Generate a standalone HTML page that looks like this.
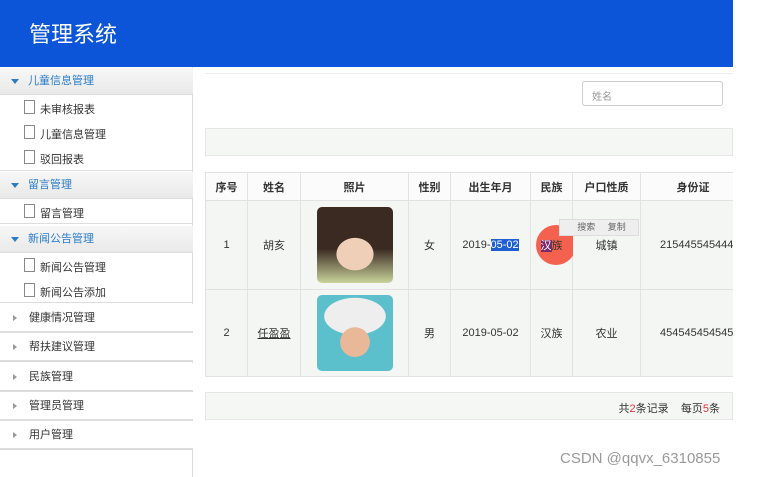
<!DOCTYPE html><html><head><meta charset="utf-8"><style>
*{margin:0;padding:0;box-sizing:border-box}
body{width:760px;height:477px;background:#fff;font-family:"Liberation Sans","Noto Sans CJK SC",sans-serif;position:relative;overflow:hidden;font-size:11px;color:#333}
.hdr{position:absolute;left:0;top:0;width:733px;height:67px;background:#0d55d8;color:#fff;font-size:22px;padding:17px 0 0 29px}
.side{position:absolute;left:0;top:67px;width:193px;height:410px;background:#fff;border-right:1px solid #ddd}
.r{position:absolute;left:0;width:193px;border-bottom:1px solid #ddd}
.g{background:linear-gradient(#f7f7f7,#e9e9e9);color:#2a7cc7;height:27px;line-height:27px;padding-left:28px;font-size:11px}
.g:before{content:"";position:absolute;left:11px;top:11px;border:4px solid transparent;border-top:5px solid #2a7cc7;border-bottom:0}
.it{position:absolute;left:40px;font-size:11px;color:#333}
.it:before{content:"";position:absolute;left:-16px;top:-1px;width:9px;height:12px;border:1px solid #888;background:#fff}
.c{background:#fff;height:29px;line-height:29px;padding-left:29px;border-bottom:2px solid #ddd}
.c:before{content:"";position:absolute;left:13px;top:11px;border:3px solid transparent;border-left:4px solid #999;border-right:0}
.main{position:absolute;left:193px;top:67px;width:540px;height:410px;background:#fff}
.tw{position:absolute;left:205px;top:172px;width:528px;height:206px;overflow:hidden}
table{border-collapse:collapse;font-size:11px;table-layout:fixed;width:540px}
td,th{border:1px solid #e2e2e2;text-align:center;color:#333}
th{height:28px;background:#fbfbfb;font-weight:bold}
tbody td{background:#f4f6f4}
.ph{width:76px;height:76px;border-radius:5px;margin:auto}
</style></head><body>
<div class="hdr">管理系统</div>
<div class="side">
<div class="r g" style="top:1px">儿童信息管理</div>
<div class="r" style="top:28px;height:76px;border-right:1px solid #ddd"></div>
<div class="it" style="top:34px">未审核报表</div>
<div class="it" style="top:59px">儿童信息管理</div>
<div class="it" style="top:84px">驳回报表</div>
<div class="r g" style="top:105px">留言管理</div>
<div class="r" style="top:132px;height:25px"></div>
<div class="it" style="top:138px">留言管理</div>
<div class="r g" style="top:159px">新闻公告管理</div>
<div class="r" style="top:186px;height:50px"></div>
<div class="it" style="top:192px">新闻公告管理</div>
<div class="it" style="top:217px">新闻公告添加</div>
<div class="r c" style="top:237px">健康情况管理</div>
<div class="r c" style="top:266px">帮扶建议管理</div>
<div class="r c" style="top:296px">民族管理</div>
<div class="r c" style="top:325px">管理员管理</div>
<div class="r c" style="top:354px">用户管理</div>
<div style="position:absolute;left:193px;top:265px;width:3px;height:90px;background:#4a5670"></div>
</div>
<div class="main"></div>
<div style="position:absolute;left:205px;top:73px;width:528px;height:1px;background:#eee"></div>
<div style="position:absolute;left:582px;top:81px;width:141px;height:25px;border:1px solid #ccc;border-radius:3px;color:#999;padding:6px 0 0 9px;font-size:10px">姓名</div>
<div style="position:absolute;left:205px;top:128px;width:528px;height:28px;background:#f5f7f5;border:1px solid #e6e6e6"></div>
<div class="tw"><table>
<colgroup><col width="42"><col width="53"><col width="108"><col width="42"><col width="80"><col width="42"><col width="68"><col width="105"></colgroup>
<thead><tr><th>序号</th><th>姓名</th><th>照片</th><th>性别</th><th>出生年月</th><th>民族</th><th>户口性质</th><th>身份证</th></tr></thead>
<tbody>
<tr style="height:89px"><td>1</td><td>胡亥</td><td><div class="ph" style="background:radial-gradient(ellipse 40% 35% at 50% 62%,#f0cfb8 60%,transparent 62%),linear-gradient(#3a2a22 55%,#c9d39a)"></div></td><td>女</td><td>2019-<span style="background:#1f5fd0;color:#fff">05-02</span></td><td style="position:relative"><div style="position:absolute;left:5px;top:24px;width:40px;height:40px;border-radius:50%;background:#f4624f"></div><span style="position:relative;background:#7a2a6a;color:#fff">汉</span><span style="position:relative">族</span></td><td style="position:relative"><div style="position:absolute;left:-14px;top:18px;width:80px;height:17px;background:#eee;border:1px solid #ddd;font-size:9px;line-height:15px;color:#666">&nbsp;&nbsp;搜索&nbsp;&nbsp;&nbsp;&nbsp;&nbsp;复制</div>城镇</td><td style="text-align:left;overflow:hidden;white-space:nowrap;padding-left:19px">2154455454445</td></tr>
<tr style="height:87px"><td>2</td><td><u>任盈盈</u></td><td><div class="ph" style="background:radial-gradient(ellipse 32% 32% at 50% 62%,#e8b898 60%,transparent 62%),radial-gradient(ellipse 50% 30% at 50% 28%,#eee 80%,transparent 82%),#5bc0cc"></div></td><td>男</td><td>2019-05-02</td><td>汉族</td><td>农业</td><td style="text-align:left;overflow:hidden;white-space:nowrap;padding-left:19px">4545454545454</td></tr>
</tbody></table></div>
<div style="position:absolute;left:205px;top:392px;width:528px;height:28px;background:#f5f7f5;border:1px solid #e6e6e6;text-align:right;padding:7px 12px 0 0;font-size:11px">共<span style="color:#d33">2</span>条记录 &nbsp;&nbsp; 每页<span style="color:#d33">5</span>条</div>
<div style="position:absolute;left:560px;top:450px;font-size:15px;color:#999">CSDN @qqvx_6310855</div>
</body></html>
